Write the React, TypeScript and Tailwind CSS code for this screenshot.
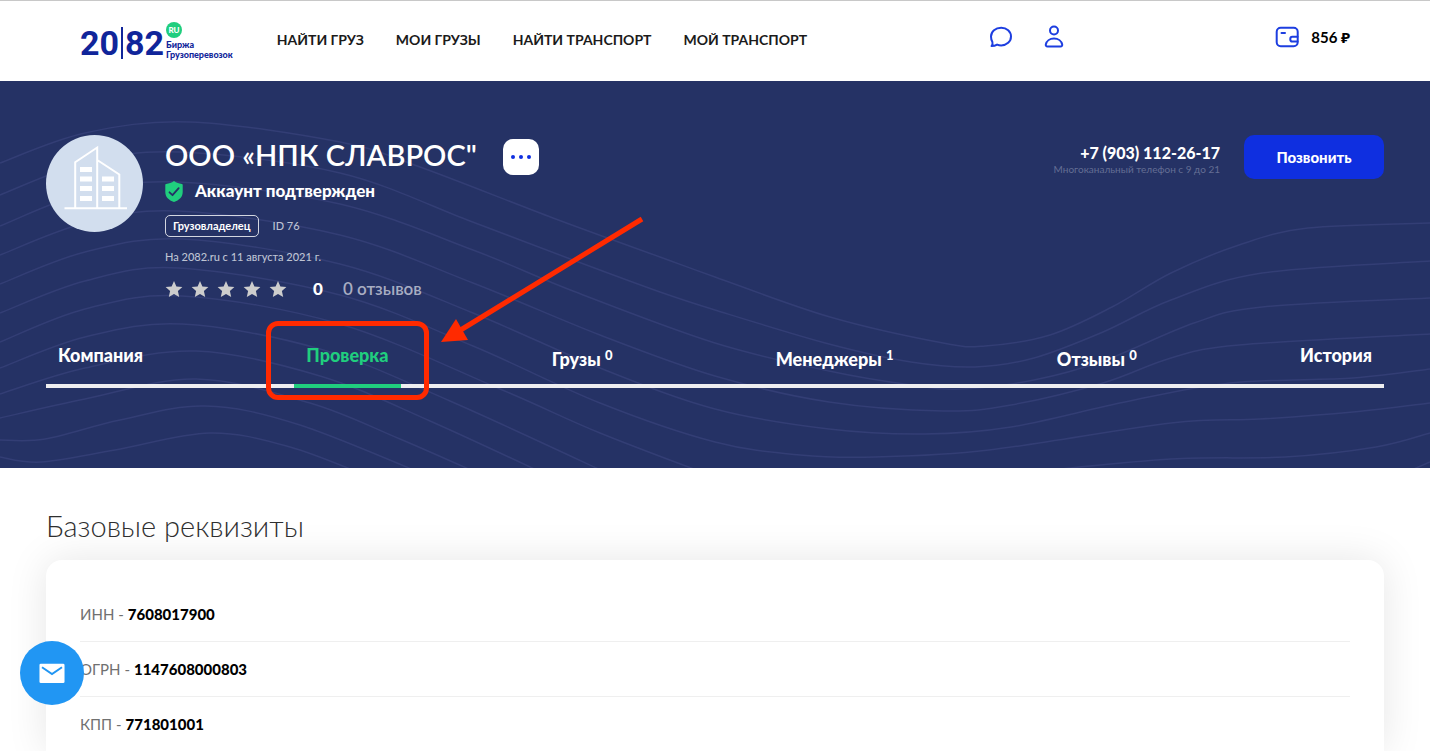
import type { ReactNode } from "react";

const navLinks = ["НАЙТИ ГРУЗ", "МОИ ГРУЗЫ", "НАЙТИ ТРАНСПОРТ", "МОЙ ТРАНСПОРТ"];

const tabs: { name: string; count?: number; active?: boolean }[] = [
  { name: "Компания" },
  { name: "Проверка", active: true },
  { name: "Грузы", count: 0 },
  { name: "Менеджеры", count: 1 },
  { name: "Отзывы", count: 0 },
  { name: "История" },
];

const requisites = [
  { name: "ИНН", value: "7608017900" },
  { name: "ОГРН", value: "1147608000803" },
  { name: "КПП", value: "771801001" },
];

type Point = [number, number];

const waves: Point[][] = [
  [[0, 82], [85, 52], [190, 41], [340, 61], [420, 86], [553, 137], [660, 176], [715, 196], [830, 236], [943, 262], [985, 265], [1050, 254], [1112, 226], [1171, 192], [1239, 164], [1308, 147], [1430, 142]],
  [[0, 114], [85, 82], [180, 71], [340, 92], [470, 140], [573, 179], [660, 211], [715, 229], [829, 263], [911, 281], [975, 286], [1034, 277], [1103, 251], [1171, 219], [1262, 192], [1430, 180]],
  [[0, 145], [85, 112], [178, 101], [340, 123], [473, 169], [573, 210], [715, 262], [829, 290], [911, 304], [961, 308], [1034, 299], [1103, 280], [1194, 242], [1262, 226], [1430, 217]],
  [[0, 174], [85, 142], [178, 130], [340, 154], [473, 202], [600, 254], [715, 295], [829, 321], [943, 330], [1011, 324], [1103, 302], [1171, 277], [1239, 264], [1430, 253]],
  [[0, 203], [85, 171], [182, 158], [340, 183], [473, 232], [600, 287], [715, 328], [829, 348], [925, 353], [1011, 346], [1125, 321], [1230, 302], [1353, 297], [1430, 288]],
  [[0, 232], [85, 200], [178, 187], [340, 214], [473, 265], [600, 322], [715, 361], [800, 374], [875, 376], [989, 369], [1171, 342], [1260, 338], [1353, 331], [1430, 322]],
  [[0, 261], [85, 228], [182, 215], [340, 243], [500, 308], [600, 352], [715, 396]],
  [[0, 287], [85, 256], [182, 243], [320, 268], [450, 320], [620, 398]],
  [[0, 313], [85, 287], [196, 270], [320, 295], [430, 340], [560, 400]],
  [[0, 337], [85, 318], [196, 298], [310, 322], [400, 358], [500, 402]],
  [[0, 359], [45, 358], [120, 339], [205, 325], [300, 344], [440, 400]],
  [[0, 376], [41, 381], [115, 369], [210, 352], [290, 366], [370, 396]],
  [[1040, 390], [1171, 378], [1285, 376], [1376, 366], [1430, 352]],
  [[1400, 394], [1430, 381]],
];

const smooth = (points: Point[]) =>
  points.slice(1).reduce((d, [x, y], i) => {
    const prev = points[i];
    const before = points[i - 1] ?? prev;
    const after = points[i + 2] ?? [x, y];
    const x1 = prev[0] + (x - before[0]) / 6;
    const y1 = prev[1] + (y - before[1]) / 6;
    const x2 = x - (after[0] - prev[0]) / 6;
    const y2 = y - (after[1] - prev[1]) / 6;
    return `${d}C${x1} ${y1} ${x2} ${y2} ${x} ${y}`;
  }, `M${points[0][0]} ${points[0][1]}`);

const Waves = () => (
  <svg
    className="absolute inset-0 h-full w-full"
    viewBox="0 0 1430 387"
    preserveAspectRatio="none"
    fill="none"
    stroke="#333e75"
    strokeWidth="1.5"
    aria-hidden="true"
  >
    {waves.map((points, i) => (
      <path key={i} d={smooth(points)} />
    ))}
  </svg>
);

const Logo = () => (
  <a href="#" className="flex items-end text-[#10259a]">
    <span className="flex items-center font-['Roboto'] text-[34px] leading-[34px] font-bold">
      20
      <span className="mx-[2px] h-8 w-[2px] bg-[#10259a]" />
      82
    </span>
    <span className="ml-[2px] flex flex-col text-[9px] leading-[10px] font-black">
      <span className="mb-[2px] flex h-4 w-4 items-center justify-center rounded-full bg-[#20ce7e] text-[8px] text-white">
        RU
      </span>
      <span>Биржа</span>
      <span>Грузоперевозок</span>
    </span>
  </a>
);

const IconLink = ({ label, children }: { label: string; children: ReactNode }) => (
  <a href="#" aria-label={label}>
    <svg
      className="h-6 w-6"
      viewBox="0 0 24 24"
      fill="none"
      stroke="#1d3ee0"
      strokeWidth="2"
      strokeLinecap="round"
      strokeLinejoin="round"
    >
      {children}
    </svg>
  </a>
);

const Header = () => (
  <header className="flex h-[81px] items-center border-t border-[#c8c8c8] bg-white px-20">
    <Logo />
    <nav className="mb-[2px] ml-11 flex gap-8 text-sm font-bold text-[#1b1b1b]">
      {navLinks.map((link) => (
        <a key={link} href="#">
          {link}
        </a>
      ))}
    </nav>
    <div className="mb-2 ml-auto flex items-center">
      <div className="mr-[209px] flex gap-[29px]">
        <IconLink label="Сообщения">
          <path d="M12.2 2.700c5.500 0 9.800 3.700 9.800 8.800s-4.300 8.900-9.800 8.900c-1.500 0-2.900-.3-4.100-.8-1.600 1-3.600 1.500-5.600 1.500 1-1 1.300-2.500.9-4.100-.9-1.500-1.400-3.400-1.400-5.500 0-5.100 4.500-8.800 10.200-8.800Z" />
        </IconLink>
        <IconLink label="Профиль">
          <circle cx="12" cy="5.500" r="4" />
          <path d="M5.500 21.500c-1.300 0-1.900-.8-1.700-2 .6-3.500 4-6 8.200-6s7.600 2.500 8.200 6c.2 1.200-.4 2-1.700 2Z" />
        </IconLink>
      </div>
      <a href="#" className="flex items-center gap-3 text-[15px] font-bold text-black">
        <svg
          className="h-6 w-6"
          viewBox="0 0 24 24"
          fill="none"
          stroke="#1d3ee0"
          strokeWidth="2"
          strokeLinecap="round"
          strokeLinejoin="round"
        >
          <rect x="1.700" y="2.700" width="21" height="18.600" rx="4" />
          <path d="M6.500 8h3.500M22.500 11.800h-5.200c-1.200 0-2 .8-2 2.100v.6c0 1.300.8 2.100 2 2.100h5.200" />
        </svg>
        856 ₽
      </a>
    </div>
  </header>
);

const Building = () => (
  <svg
    className="h-[97px] w-[97px] shrink-0"
    viewBox="0 0 97 97"
    fill="none"
    stroke="white"
    strokeWidth="2"
    aria-hidden="true"
  >
    <circle cx="48.500" cy="48.500" r="48.500" fill="#d2deee" stroke="none" />
    <path d="M18.500 73.200h62.500M29.200 73V27.200L51.200 12.500V73M51.200 25L73.300 39.500V73" />
    <g fill="white" stroke="none">
      <path d="M34 32h12v5H34zM34 41.500h12v5H34zM34 51h12v5H34zM34 61h12v5H34z" />
      <path d="M56 41.500h12v5H56zM56 51h12v5H56zM56 61h12v5H56z" />
    </g>
  </svg>
);

const Shield = () => (
  <svg className="h-[21px] w-[18px]" viewBox="0 0 18 21" fill="none" aria-hidden="true">
    <path
      d="M9 0c2.500 1.700 5 2.600 8 3 .4.100.7.400.7.900V11c0 5-3.500 8.200-8.700 10C3.800 19.200.3 16 .3 11V3.900c0-.5.3-.8.7-.9 3-.4 5.500-1.300 8-3Z"
      fill="#20ce7e"
    />
    <path
      d="m4.500 11.300 3 2.900 6.200-7"
      stroke="#253265"
      strokeWidth="1.800"
      strokeLinecap="round"
      strokeLinejoin="round"
    />
  </svg>
);

const Star = () => (
  <svg className="h-[18px] w-[18px]" viewBox="0 0 18 18" fill="#cdcdcd" aria-hidden="true">
    <path d="m9 1 2.400 5.500 6 .6-4.500 4 1.300 5.900L9 13.900 3.800 17l1.300-5.900-4.500-4 6-.6Z" />
  </svg>
);

// red frame and arrow that point at the current tab
const Callout = () => (
  <>
    <span className="pointer-events-none absolute -inset-x-7 -top-[22px] -bottom-4 rounded-xl border-[5px] border-[#ff2a00]" />
    <svg
      className="pointer-events-none absolute -top-[127px] left-full ml-10 h-[128px] w-[204px]"
      viewBox="0 0 204 128"
      fill="none"
      aria-hidden="true"
    >
      <path d="M201 3 18 115" stroke="#ff2a00" strokeWidth="5" />
      <path d="M0 126 15 103 27 124Z" fill="#ff2a00" />
    </svg>
  </>
);

const Hero = () => (
  <section className="relative bg-[#253265] px-[46px] pt-[54px] pb-20 text-white">
    <Waves />
    <div className="relative flex items-start">
      <Building />
      <div className="ml-[22px]">
        <div className="flex h-11 items-center gap-[26px]">
          <h1 className="pb-1 text-[29px] leading-10 font-semibold">
            ООО «НПК СЛАВРОС&quot;
          </h1>
          <button
            aria-label="Ещё"
            className="flex h-9 w-9 items-center justify-center gap-1 rounded-[10px] bg-white"
          >
            <span className="h-1 w-1 rounded-full bg-[#0f2fe0]" />
            <span className="h-1 w-1 rounded-full bg-[#0f2fe0]" />
            <span className="h-1 w-1 rounded-full bg-[#0f2fe0]" />
          </button>
        </div>
        <p className="flex h-6 items-center gap-3 text-[17px] font-black">
          <Shield />
          Аккаунт подтвержден
        </p>
        <div className="mt-3 flex h-[22px] items-center gap-[14px] text-[11px]">
          <span className="flex h-[22px] items-center rounded-[5px] border border-white/80 px-[7px] font-bold">
            Грузовладелец
          </span>
          <span className="font-medium text-[#bec3d3]">ID 76</span>
        </div>
        <p className="mt-2.5 text-[11px] leading-5 font-medium text-[#bec3d3]">
          На 2082.ru с 11 августа 2021 г.
        </p>
        <div className="mt-3 flex h-5 items-center">
          <div className="flex gap-2">
            <Star />
            <Star />
            <Star />
            <Star />
            <Star />
          </div>
          <span className="ml-[26px] text-[17px] font-black">0</span>
          <a href="#" className="ml-5 text-[17px] font-semibold text-[#a8adc2]">
            0 отзывов
          </a>
        </div>
      </div>
      <div className="ml-auto flex items-start gap-6">
        <div className="pt-2 text-right">
          <a href="tel:+79031122617" className="block text-base leading-5 font-black">
            +7 (903) 112-26-17
          </a>
          <p className="text-[10px] leading-3 text-[#646e94]">
            Многоканальный телефон с 9 до 21
          </p>
        </div>
        <button className="h-11 w-[140px] rounded-[10px] bg-[#0f2fe0] text-[15px] font-black">
          Позвонить
        </button>
      </div>
    </div>

    <nav className="relative mt-11 flex justify-between text-lg leading-6 font-black">
      <span className="absolute inset-x-0 bottom-0 h-1 bg-[#eeeef0]" />
      {tabs.map(({ name, count, active }) => (
        <a
          key={name}
          href="#"
          className={
            active
              ? "relative h-[45px] border-b-4 border-[#20ce7e] px-3 text-[#20ce7e]"
              : "relative h-[45px] px-3"
          }
        >
          {count === undefined ? (
            name
          ) : (
            <span className="block pt-1">
              {name} <sup className="text-[13px]">{count}</sup>
            </span>
          )}
          {active && <Callout />}
        </a>
      ))}
    </nav>
  </section>
);

const Requisites = () => (
  <section className="grow overflow-hidden px-[46px] pt-[38px]">
    <h2 className="text-[29px] leading-10 font-light text-[#2f2f2f]">
      Базовые реквизиты
    </h2>
    <dl className="mt-[14px] rounded-t-2xl bg-white px-[34px] pt-[27px] text-[15px] shadow-[0_0_40px_rgba(0,0,0,0.1)]">
      {requisites.map(({ name, value }) => (
        <div
          key={name}
          className="flex h-[55px] items-center gap-1 border-b border-[#efefef] last:border-0"
        >
          <dt className="text-[#707070]">{name} -</dt>
          <dd className="font-black text-black">{value}</dd>
        </div>
      ))}
    </dl>
  </section>
);

const App = () => (
  <div className="flex min-h-screen flex-col bg-white font-['Lato','Noto_Sans',sans-serif]">
    <Header />
    <Hero />
    <Requisites />
    <button
      aria-label="Написать нам"
      className="fixed bottom-[46px] left-5 flex h-16 w-16 items-center justify-center rounded-full bg-[#2196f3]"
    >
      <svg className="h-8 w-8" viewBox="0 0 24 24" aria-hidden="true">
        <rect x="2.600" y="5" width="18.800" height="14.500" rx="1" fill="white" />
        <path d="m4.500 7.700 7.500 5.100 7.500-5.100" fill="none" stroke="#2196f3" strokeWidth="1.500" />
      </svg>
    </button>
  </div>
);

export default App;
